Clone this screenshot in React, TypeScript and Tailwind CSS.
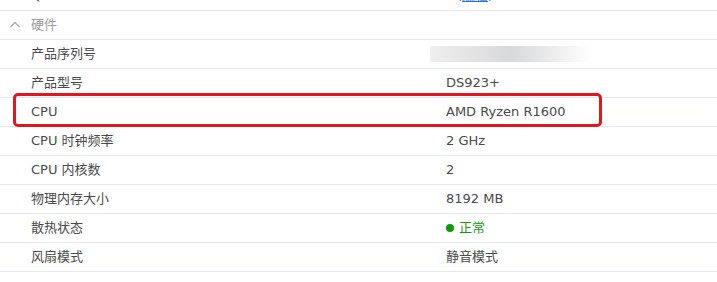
const rows: { label: string; value: React.ReactNode; key: string }[] = [
  { key: 'sn', label: '产品序列号', value: <div className="h-4 w-[162px] -ml-4 bg-gradient-to-r from-[#efefef] via-[#d8d9da] to-white" /> },
  { key: 'model', label: '产品型号', value: 'DS923+' },
  { key: 'cpu', label: 'CPU', value: 'AMD Ryzen R1600' },
  { key: 'clock', label: 'CPU 时钟频率', value: '2 GHz' },
  { key: 'cores', label: 'CPU 内核数', value: '2' },
  { key: 'mem', label: '物理内存大小', value: '8192 MB' },
  {
    key: 'thermal',
    label: '散热状态',
    value: (
      <span className="flex items-center gap-[5px] text-[#12a012]">
        <span className="h-2 w-2 rounded-full bg-[#0a9a0a]" />
        正常
      </span>
    ),
  },
  { key: 'fan', label: '风扇模式', value: '静音模式' },
];

function Row({ label, value, highlight }: { label: React.ReactNode; value: React.ReactNode; highlight?: boolean }) {
  return (
    <div className="relative flex h-[29px] items-center border-b border-[#e6e9ee]">
      <div className="w-[446px] pl-[31px]">{label}</div>
      <div className="flex-1">{value}</div>
      {highlight && (
        <div className="pointer-events-none absolute -top-[5px] -bottom-[1px] left-[13px] w-[589px] rounded-[5px] border-[3px] border-[#e3161e]" />
      )}
    </div>
  );
}

export default function App() {
  return (
    <div
      className="h-[282px] w-[717px] overflow-hidden bg-white text-[13px] text-[#4a4a4a]"
      style={{ fontFamily: '"DejaVu Sans", "Noto Sans CJK SC", sans-serif' }}
    >
      {/* partially scrolled-off row */}
      <div className="-mt-[18px]">
        <Row
          label="QuickConnect ID"
          value={
            <span className="ml-[11px] text-[#6a6a6a]">
              (<span className="text-[#1a73e8] underline">编辑</span>)
            </span>
          }
        />
      </div>

      {/* section header */}
      <div className="flex h-[29px] items-center border-b border-[#e6e9ee] pl-[9px] text-[#9c9c9c]">
        <svg className="mr-[10px] h-3 w-3" viewBox="0 0 12 12" fill="none" stroke="#a8a8a8" strokeWidth={1.3}>
          <path d="M1.5 8 L6 3.5 L10.5 8" />
        </svg>
        硬件
      </div>

      {rows.map((r) => (
        <Row key={r.key} label={r.label} value={r.value} highlight={r.key === 'cpu'} />
      ))}
    </div>
  );
}
